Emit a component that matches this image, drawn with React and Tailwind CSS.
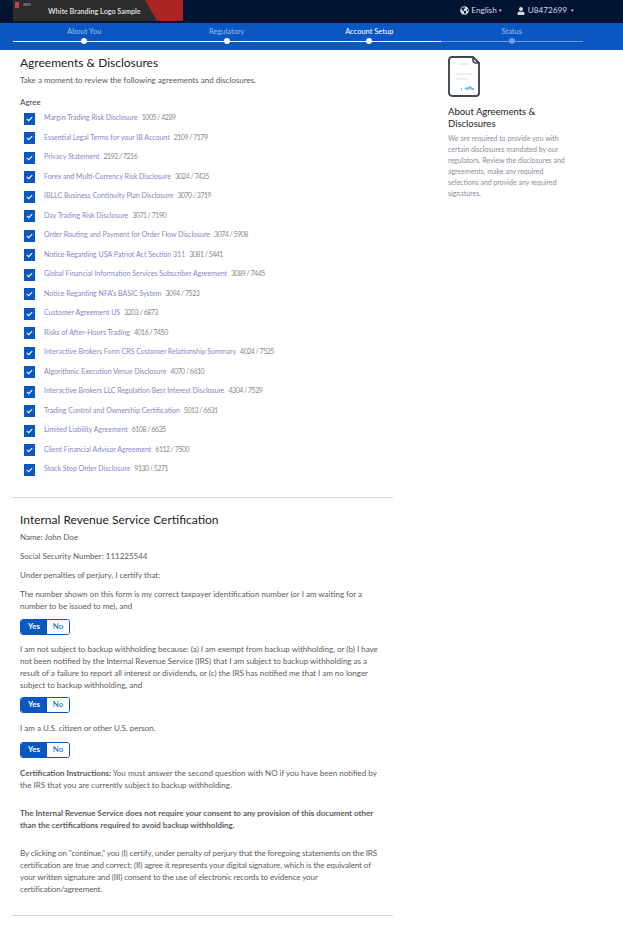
import React from "react";
import { FaGlobeAmericas, FaUser } from "react-icons/fa";

const items = [
  ["Margin Trading Risk Disclosure", "1005 / 4289"],
  ["Essential Legal Terms for your IB Account", "2109 / 7179"],
  ["Privacy Statement", "2192 / 7216"],
  ["Forex and Multi-Currency Risk Disclosure", "3024 / 7435"],
  ["IBLLC Business Continuity Plan Disclosure", "3070 / 3719"],
  ["Day Trading Risk Disclosure", "3071 / 7190"],
  ["Order Routing and Payment for Order Flow Disclosure", "3074 / 5908"],
  ["Notice Regarding USA Patriot Act Section 311", "3081 / 5441"],
  ["Global Financial Information Services Subscriber Agreement", "3089 / 7445"],
  ["Notice Regarding NFA's BASIC System", "3094 / 7523"],
  ["Customer Agreement US", "3203 / 6873"],
  ["Risks of After-Hours Trading", "4016 / 7450"],
  ["Interactive Brokers Form CRS Customer Relationship Summary", "4024 / 7525"],
  ["Algorithmic Execution Venue Disclosure", "4070 / 6610"],
  ["Interactive Brokers LLC Regulation Best Interest Disclosure", "4304 / 7529"],
  ["Trading Control and Ownership Certification", "5013 / 6631"],
  ["Limited Liability Agreement", "6108 / 6635"],
  ["Client Financial Advisor Agreement", "6112 / 7500"],
  ["Stock Stop Order Disclosure", "9130 / 5271"],
];

const steps = [
  ["About You", "text-[#9dbbec]", "bg-white", "bg-white"],
  ["Regulatory", "text-[#9dbbec]", "bg-white", "bg-white"],
  ["Account Setup", "text-white", "bg-white", "bg-white"],
  ["Status", "text-[#9dbbec]", "bg-[#6f9be0]", "bg-[#6f9be0]"],
];

function YesNo() {
  return (
    <div className="flex h-[16px] w-[50px] overflow-hidden rounded-[3px] border border-[#0b57c2] text-[8px] font-bold leading-[13px]">
      <div className="w-[26px] bg-[#0b57c2] text-center text-white">Yes</div>
      <div className="flex-1 bg-white text-center font-normal text-[#0b57c2]">No</div>
    </div>
  );
}

function Check() {
  return (
    <div className="flex h-[12px] w-[11px] shrink-0 items-center justify-center bg-[#0b57c2]">
      <svg width="7" height="6" viewBox="0 0 7 6" fill="none">
        <path d="M0.8 2.8l1.9 1.9L6.2 1.2" stroke="white" strokeWidth="1.1" />
      </svg>
    </div>
  );
}

export default function App() {
  return (
    <div className="min-h-[927px] w-[623px] overflow-hidden bg-white font-['Lato',sans-serif] text-[8px] text-[#5b5b5b]">
      <header className="flex h-[23px] items-start justify-between bg-[#01142f] pl-[13px] pr-[49px]">
        <div className="relative h-[21px] w-[170px] overflow-hidden bg-[#2c2c2c]">
          <span className="absolute left-[2px] top-[2px] h-[6px] w-[4px] bg-[#c9413d]" />
          <span className="absolute left-[10px] top-[3px] text-[3.5px] leading-[5px] text-[#aaa]">IBKR</span>
          <span className="absolute left-[35px] top-[7px] text-[7.2px] font-bold leading-[10px] text-[#d8d8d8]">White Branding Logo Sample</span>
          <span className="absolute right-0 top-0 h-[21px] w-[38px] bg-[#ab2525] [clip-path:polygon(0_0,100%_0,100%_100%,32%_100%)]" />
        </div>
        <div className="mt-[5px] flex items-center text-[8.2px] leading-[11px] text-[#d5dbe5]">
          <FaGlobeAmericas size={9} className="mr-[2px]" />
          <span>English</span>
          <span className="ml-[2px] text-[5px]">▾</span>
          <FaUser size={8} className="ml-[15px] mr-[3px]" />
          <span>U8472699</span>
          <span className="ml-[4px] text-[5px]">▾</span>
        </div>
      </header>
      <nav className="flex h-[27px] bg-[#0b57c2] pl-[13px] pr-[40px]">
        {steps.map(([label, color, dot, line]) => (
          <div key={label} className="relative flex-1 pt-[4px] text-center">
            <div className={`text-[7.5px] leading-[9px] ${color}`}>{label}</div>
            <div className={`mt-[5px] h-[1px] ${line}`} />
            <span className={`absolute left-1/2 top-[15px] h-[6px] w-[6px] -translate-x-1/2 rounded-full ${dot}`} />
          </div>
        ))}
      </nav>
      <div className="flex">
        <main className="w-[393px] shrink-0 pl-[12px]">
          <div className="pl-[8px] pt-[5px]">
            <h1 className="text-[12px] leading-[16px] text-[#222]">Agreements &amp; Disclosures</h1>
            <p className="mt-[4px] leading-[10px]">Take a moment to review the following agreements and disclosures.</p>
            <div className="mt-[12px] leading-[10px] text-[#444]">Agree</div>
            <ul className="mt-[2px]">
              {items.map(([name, code]) => (
                <li key={name} className="flex h-[19.5px] items-center pl-[4px]">
                  <Check />
                  <div className="-mt-[3px] ml-[9px] text-[7px]">
                    <span className="text-[#8687c8]">{name}</span>
                    <span className="ml-[4px] tracking-[-0.5px] text-[#8a8a8a]">{code}</span>
                  </div>
                </li>
              ))}
            </ul>
          </div>
          <hr className="mt-[17px] border-[#d8d8d8]" />
          <section className="pl-[8px] pr-[8px] pt-[15px] leading-[12px]">
            <h2 className="text-[12px] leading-[14px] text-[#222]">Internal Revenue Service Certification</h2>
            <p className="mt-[4px]">Name: John Doe</p>
            <p className="mt-[7px]">Social Security Number: 111225544</p>
            <p className="mt-[7px]">Under penalties of perjury, I certify that:</p>
            <p className="mt-[7px]">The number shown on this form is my correct taxpayer identification number (or I am waiting for a number to be issued to me), and</p>
            <div className="mt-[7px]"><YesNo /></div>
            <p className="mt-[8px]">I am not subject to backup withholding because: (a) I am exempt from backup withholding, or (b) I have not been notified by the Internal Revenue Service (IRS) that I am subject to backup withholding as a result of a failure to report all interest or dividends, or (c) the IRS has notified me that I am no longer subject to backup withholding, and</p>
            <div className="mt-[6px]"><YesNo /></div>
            <p className="mt-[9px]">I am a U.S. citizen or other U.S. person.</p>
            <div className="mt-[8px]"><YesNo /></div>
            <p className="mt-[9px]"><b>Certification Instructions:</b> You must answer the second question with NO if you have been notified by the IRS that you are currently subject to backup withholding.</p>
            <p className="mt-[16px] font-bold">The Internal Revenue Service does not require your consent to any provision of this document other than the certifications required to avoid backup withholding.</p>
            <p className="mt-[16px] tracking-[-0.1px]">By clicking on "continue," you (I) certify, under penalty of perjury that the foregoing statements on the IRS certification are true and correct; (II) agree it represents your digital signature, which is the equivalent of your written signature and (III) consent to the use of electronic records to evidence your certification/agreement.</p>
          </section>
          <hr className="mt-[20px] border-[#d8d8d8]" />
        </main>
        <aside className="ml-[55px] w-[125px] pt-[6px]">
          <svg width="32" height="41" viewBox="0 0 32 41" fill="none" className="block">
            <path d="M4 1h21l6 6v30a3 3 0 0 1-3 3H4a3 3 0 0 1-3-3V4a3 3 0 0 1 3-3z" stroke="#3f4552" strokeWidth="1.9" />
            <path d="M25 1v3a3 3 0 0 0 3 3h3" stroke="#3f4552" strokeWidth="1.6" />
            <path d="M11 8h10M8 18h17M8 23h12" stroke="#e3e7ee" strokeWidth="1.6" />
            <path d="M13 33h1M17 33l2-1 1 1 2-2 2 2 2 0" stroke="#6cb9f5" strokeWidth="1.8" />
          </svg>
          <h3 className="mt-[9px] text-[9.5px] leading-[12px] text-[#222]">About Agreements &amp; Disclosures</h3>
          <p className="mt-[3px] text-[7px] leading-[11px] text-[#8c8c9c]">We are required to provide you with certain disclosures mandated by our regulators. Review the disclosures and agreements, make any required selections and provide any required signatures.</p>
        </aside>
      </div>
    </div>
  );
}
